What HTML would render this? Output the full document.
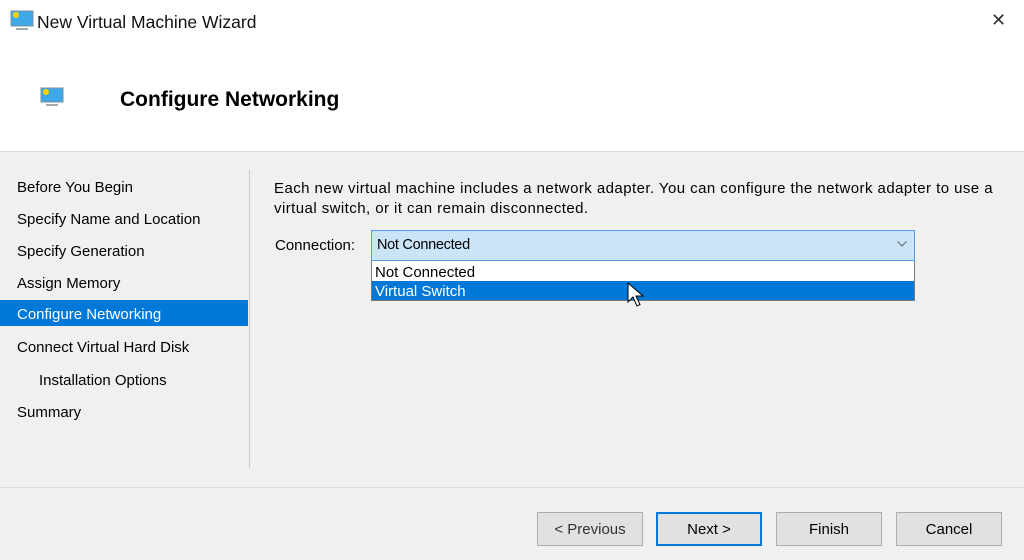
<!DOCTYPE html>
<html><head><style>
*{margin:0;padding:0;box-sizing:border-box}
body{width:1024px;height:560px;background:#f0f0f0;font-family:"Liberation Sans",sans-serif;color:#000;position:relative;overflow:hidden;font-size:15px}
.abs{position:absolute}
.hdr{left:0;top:0;width:1024px;height:152px;background:#fff;border-bottom:1px solid #dcdcdc}
.nav{left:17px;font-size:15px;line-height:20px}
.btn{top:512px;height:34px;width:106px;border:1px solid #adadad;background:#e1e1e1;text-align:center;line-height:34px;font-size:15px}
</style></head><body>
<div class="abs hdr"></div>
<svg class="abs" style="left:10px;top:10px" width="24" height="22" viewBox="0 0 24 22"><rect x="1" y="1" width="22" height="15" fill="#3fa9e8" stroke="#7a8fa0"/><circle cx="6" cy="5" r="3" fill="#ffd200"/><rect x="6" y="18" width="12" height="2" fill="#9aa"/></svg>
<div class="abs" style="left:37px;top:12px;font-size:17.5px;color:#111">New Virtual Machine Wizard</div>
<div class="abs" style="left:991px;top:10px;font-size:18px;color:#333">✕</div>
<svg class="abs" style="left:40px;top:87px" width="24" height="22" viewBox="0 0 24 22"><rect x="1" y="1" width="22" height="14" fill="#3fa9e8" stroke="#7a8fa0"/><circle cx="6" cy="5" r="3" fill="#ffd200"/><rect x="6" y="17" width="12" height="2" fill="#aaa"/></svg>
<div class="abs" style="left:120px;top:88px;font-size:21px;font-weight:bold">Configure Networking</div>
<div class="abs nav" style="top:178px">Before You Begin</div>
<div class="abs nav" style="top:210px">Specify Name and Location</div>
<div class="abs nav" style="top:242px">Specify Generation</div>
<div class="abs nav" style="top:274px">Assign Memory</div>
<div class="abs" style="left:0;top:300px;width:248px;height:26px;background:#0078d7"></div>
<div class="abs nav" style="top:305px;color:#fff">Configure Networking</div>
<div class="abs nav" style="top:338px">Connect Virtual Hard Disk</div>
<div class="abs nav" style="top:371px;left:39px">Installation Options</div>
<div class="abs nav" style="top:403px">Summary</div>
<div class="abs" style="left:249px;top:170px;width:1px;height:298px;background:#c8c8c8"></div>
<div class="abs" style="left:274px;top:179px;font-size:15px;line-height:20px;width:750px;letter-spacing:0.44px;white-space:nowrap">Each new virtual machine includes a network adapter. You can configure the network adapter to use a<br>virtual switch, or it can remain disconnected.</div>
<div class="abs" style="left:275px;top:237px">Connection:</div>
<div class="abs" style="left:371px;top:230px;width:544px;height:31px;background:#cce4f7;border:1px solid #569de5"></div>
<div class="abs" style="left:377px;top:237px;font-size:14.5px;letter-spacing:-0.3px">Not Connected</div>
<svg class="abs" style="left:897px;top:241px" width="10" height="6"><path d="M0.5 0.5L5 5L9.5 0.5" stroke="#666" fill="none"/></svg>
<div class="abs" style="left:371px;top:261px;width:544px;height:40px;background:#fff;border:1px solid #7a7a7a;border-top:none"></div>
<div class="abs" style="left:372px;top:281px;width:542px;height:19px;background:#0078d7"></div>
<div class="abs" style="left:375px;top:264px">Not Connected</div>
<div class="abs" style="left:375px;top:283px;color:#fff">Virtual Switch</div>
<svg class="abs" style="left:627px;top:282px" width="20" height="28" viewBox="0 0 20 28"><path d="M1 1L1 20L6 15L10 24L13 22.5L9 14L16 14Z" fill="#fff" stroke="#000"/></svg>
<div class="abs" style="left:0;top:487px;width:1024px;height:1px;background:#dcdcdc"></div>
<div class="abs btn" style="left:537px;color:#333">&lt; Previous</div>
<div class="abs btn" style="left:656px;border:2px solid #0078d7;line-height:32px">Next &gt;</div>
<div class="abs btn" style="left:776px">Finish</div>
<div class="abs btn" style="left:896px">Cancel</div>
</body></html>
